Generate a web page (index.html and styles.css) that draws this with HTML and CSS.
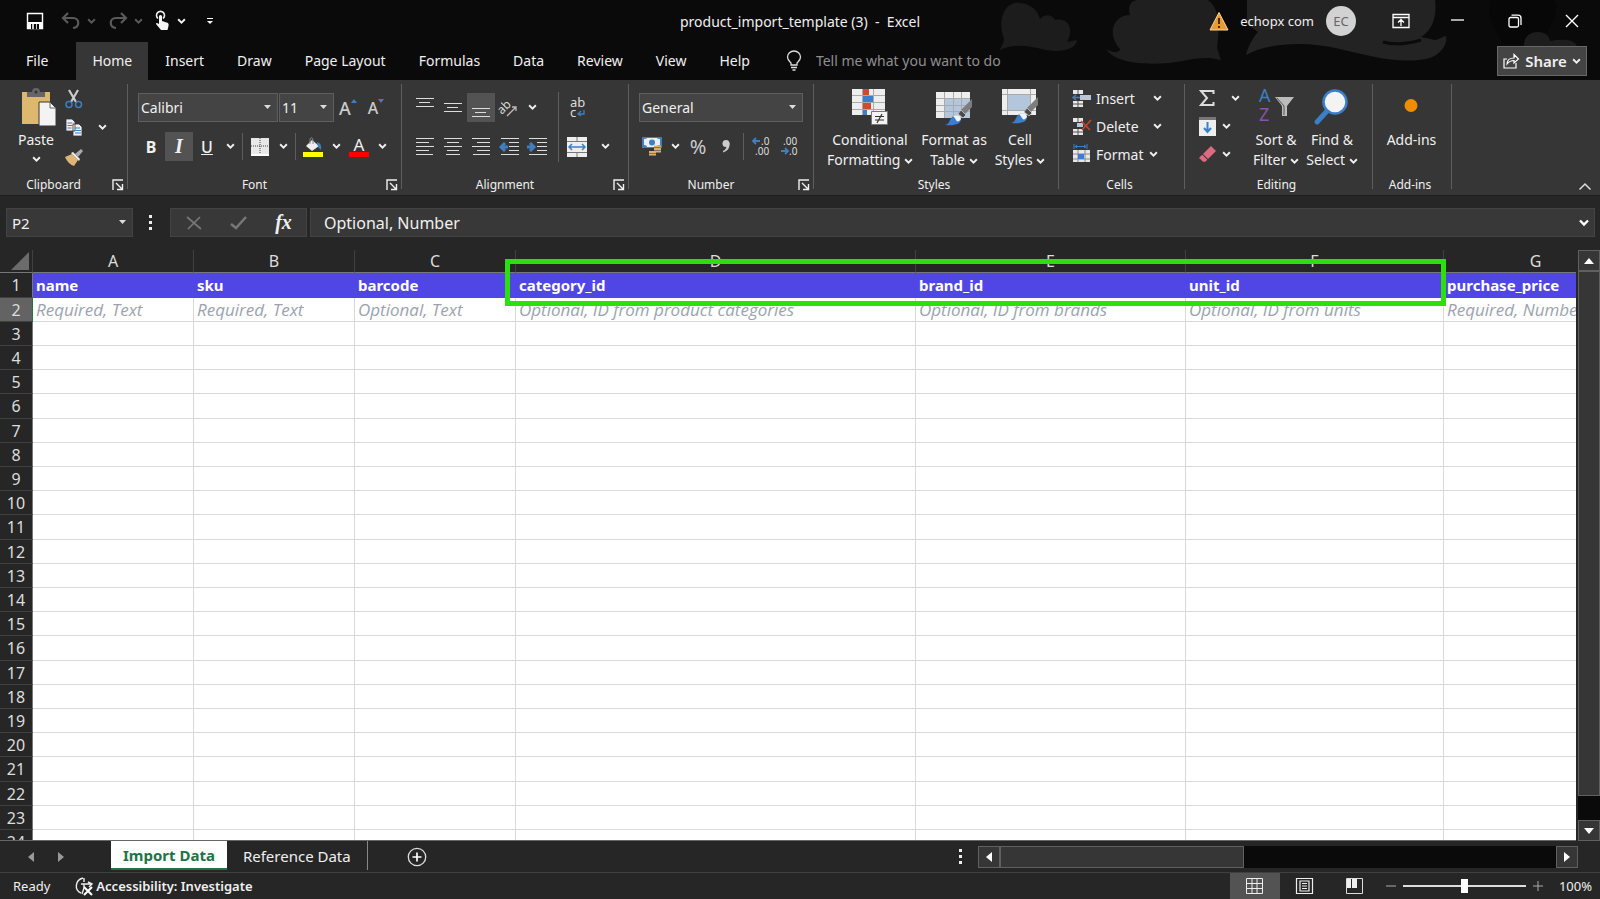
FILE: index.html
```html
<!DOCTYPE html>
<html lang="en">
<head>
  <meta charset="UTF-8">
  <meta name="viewport" content="width=device-width, initial-scale=1.0">
  <title>product_import_template (3) - Excel</title>
  <link rel="stylesheet" href="styles.css">
</head>
<body>
  <svg class="defs" aria-hidden="true">
    <symbol id="chev" viewBox="0 0 8 6"><path d="M1 1l3 3 3-3" fill="none" stroke="currentColor" stroke-width="1.7"/></symbol>
    <symbol id="launch" viewBox="0 0 12 12"><path d="M1 11V1h10M4 4l6 6M10.500 5v5.500H5" fill="none" stroke="currentColor" stroke-width="1.4"/></symbol>
    <symbol id="brush" viewBox="0 0 30 28"><path d="M28 1v8L18 19l-4-4z" fill="#7d7d7d"/><path d="M17 12l5 5-3 3-5-4z" fill="#4a4a4a" stroke="#ddd" stroke-width=".7"/><path d="M1 27c5-1 4-5 7-8 4-3 9-1 9 2 0 5-6 7-16 6z" fill="#3b7fc9"/><path d="M9 18c4-2 8 0 8 3-2 3-4 3-5 1s-2-3-3-4z" fill="#eef4fb"/></symbol>
  </svg>

  <header class="top">
    <svg class="art" viewBox="900 0 700 80" aria-hidden="true">
      <path d="M1000 50c2-5 4-8 4-11-7-18 0-38 16-36 12 1 18 8 20 16 6-6 12-4 15 1 14-3 19 10 12 22l10-2c-1 9-14 13-31 10-18-4-30-7-46 0z" fill="#1c1c1c"/>
      <path d="M1106 49c8 5 14 3 14 0-14-16-6-34 10-34-3-10 2-15 8-15h70c10 8 12 20 10 38l-1 10 4 12c-18-5-30 0-52 3-26 2-54 0-63-14z" fill="#1f1f1f"/>
      <path d="M1246 55c2-9 8-19 12-23l-11-8V0h188c2 16-2 30-14 37l14 3c6-1 8-4 11-4 2 8-5 18-16 22-28 7-60-2-86-8-39-10-76-7-98 5z" fill="#232323"/>
      <path d="M1383 42c10 3 24 2 38-2" fill="none" stroke="#0b0b0b" stroke-width="3"/>
      <path d="M1492 0h62c8 10-4 30-18 44h-32c-12-16-18-30-12-44z" fill="#070707"/>
      <path d="M1524 46c0-10 6-14 14-14 7 0 11 4 12 9 12-2 24-2 27 5z" fill="#1d1d1d"/>
    </svg>

    <div class="title-bar">
      <div class="quick">
        <button class="q-save" aria-label="Save"><svg width="18" height="18" viewBox="0 0 18 18"><path d="M1.500 1.500h15v15h-15z" fill="none" stroke="#fff" stroke-width="1.400"/><path d="M1 10h16v7H1z" fill="#fff"/><path d="M5 12h8v5H5z" fill="#0a0a0a"/><path d="M6 12h2v5H6zM10 12h1v5h-1z" fill="#ccc"/></svg></button>
        <button class="dim" aria-label="Undo"><svg width="20" height="18" viewBox="0 0 20 18"><path d="M7 1L2 6l5 5M2.500 6H12c7 0 7 9 0 10" fill="none" stroke="currentColor" stroke-width="2.200"/></svg></button>
        <button class="drop dim" aria-label="Undo list"><svg class="chev"><use href="#chev"/></svg></button>
        <button class="dim" aria-label="Redo"><svg width="20" height="18" viewBox="0 0 20 18"><path d="M13 1l5 5-5 5M17.500 6H8c-7 0-7 9 0 10" fill="none" stroke="currentColor" stroke-width="2.200"/></svg></button>
        <button class="drop dim" aria-label="Redo list"><svg class="chev"><use href="#chev"/></svg></button>
        <button aria-label="Touch mode"><svg width="16" height="20" viewBox="2 0 16 20"><path d="M5 7.500a4 4 0 1 1 5 0" fill="none" stroke="#eee" stroke-width="1.600"/><path d="M6 5q1.500-2 3 0v5l6 2q1 1 .5 3l-1 4H8l-5-6q0-2 3 0z" fill="#f4f4f4"/></svg></button>
        <button class="drop" aria-label="Touch options"><svg class="chev"><use href="#chev"/></svg></button>
        <button class="q-more" aria-label="Customize toolbar"><svg width="8" height="8" viewBox="0 0 8 8"><path d="M1 1.500h6" stroke="#fff"/><path d="M1 4h6L4 7z" fill="#fff"/></svg></button>
      </div>
      <div class="title">product_import_template (3)&nbsp; -&nbsp; Excel</div>
      <div class="account">
        <svg width="20" height="20" viewBox="0 0 20 20"><path d="M10 1.500L19 19H1z" fill="#e89a35" stroke="#ffd79a"/><path d="M10 7v6M10 15v2" stroke="#3a2404" stroke-width="1.800"/></svg>
        <span class="user">echopx com</span>
        <span class="avatar">EC</span>
      </div>
      <div class="win">
        <button aria-label="Ribbon display"><svg width="18" height="16" viewBox="0 0 18 16"><path d="M1 1.500h16v13H1zM1 4.500h16M9 13V7M6 9.500l3-3 3 3" fill="none" stroke="#fff" stroke-width="1.300"/></svg></button>
        <button aria-label="Minimize"><svg width="14" height="14" viewBox="0 0 14 14"><path d="M0 6h13" stroke="#fff" stroke-width="1.300"/></svg></button>
        <button aria-label="Restore"><svg width="14" height="14" viewBox="0 0 14 14"><rect x="1" y="3.500" width="9.500" height="9.500" rx="1.500" fill="none" stroke="#fff" stroke-width="1.300"/><path d="M3.500 1.200H10q3 0 3 3V11" fill="none" stroke="#fff" stroke-width="1.300"/></svg></button>
        <button aria-label="Close"><svg width="14" height="14" viewBox="0 0 14 14"><path d="M1 1l12 12M13 1L1 13" stroke="#fff" stroke-width="1.400"/></svg></button>
      </div>
    </div>

    <nav class="tabs">
      <button class="tab file">File</button>
      <button class="tab active">Home</button>
      <button class="tab">Insert</button>
      <button class="tab">Draw</button>
      <button class="tab">Page Layout</button>
      <button class="tab">Formulas</button>
      <button class="tab">Data</button>
      <button class="tab">Review</button>
      <button class="tab">View</button>
      <button class="tab">Help</button>
      <label class="tell">
        <svg width="16" height="21" viewBox="0 0 16 21"><path d="M5 15v-2C3 11 1.500 10 1.500 7a6.500 6 0 0 1 13 0c0 3-1.500 4-3.500 6v2zM5 17.500h6M6.500 20h3" fill="none" stroke="#ddd" stroke-width="1.300"/></svg>
        <input type="text" placeholder="Tell me what you want to do">
      </label>
      <button class="share"><svg width="17" height="16" viewBox="0 0 17 16"><path d="M4 6H1v9h12V10M4 11c0-4 3-6 7-6V1.500L15.500 6 11 10V7.500C8 7.500 6 8.500 4 11z" fill="none" stroke="#fff" stroke-width="1.200"/></svg>Share<svg class="chev"><use href="#chev"/></svg></button>
    </nav>
  </header>

  <section class="ribbon">
    <div class="group g-clip">
      <div class="body">
        <button class="big"><svg width="36" height="38" viewBox="-3 0 36 38"><path d="M1 4h28v32H1z" fill="#dfb86f"/><path d="M6 9V4h5q0-4 4-4t4 4h5v5z" fill="#666"/><circle cx="15" cy="4" r="1.500" fill="#333"/><path d="M18 14h11l6 6v18H18z" fill="#f3f3f3" stroke="#363636"/><path d="M29 14v6h6" fill="none" stroke="#666"/></svg><span>Paste</span><svg class="chev"><use href="#chev"/></svg></button>
        <div class="stack">
          <button class="tool" aria-label="Cut"><svg width="18" height="20" viewBox="0 0 18 20"><path d="M4 1l7 12M13 1L6 13" stroke="#ccc" stroke-width="2.200"/><circle cx="4" cy="15.500" r="3" fill="none" stroke="#3f7fc0" stroke-width="1.500"/><circle cx="13.500" cy="15.500" r="3" fill="none" stroke="#3f7fc0" stroke-width="1.500"/></svg></button>
          <button class="tool" aria-label="Copy"><svg width="18" height="19" viewBox="0 0 18 19"><path d="M1 1h6l3 3v9H1zM8 6h6l3 3v9H8z" fill="#f0f0f0" stroke="#363636" stroke-width=".8"/><path d="M2.500 5h5M2.500 7.500h5M2.500 10h4M10 10h5M10 12.500h6M10 15h6" stroke="#3f7fc0"/></svg></button>
          <button class="tool" aria-label="Format Painter"><svg width="20" height="18" viewBox="0 0 20 18"><path d="M1 9l7-3 6 6-4 6q-6-2-9-9z" fill="#e0b476"/><path d="M7 5l2-1 7 7-1 2z" fill="#eee"/><path d="M11 6l6-5 2 2-5 6z" fill="#aaa"/></svg></button>
        </div>
        <button class="drop mid" aria-label="Copy options"><svg class="chev"><use href="#chev"/></svg></button>
      </div>
      <div class="foot"><span>Clipboard</span><button aria-label="Clipboard settings"><svg class="launch"><use href="#launch"/></svg></button></div>
    </div>

    <div class="group g-font">
      <div class="body rows">
        <div class="row fields">
          <select class="font-name" aria-label="Font"><option>Calibri</option></select>
          <select class="font-size" aria-label="Font size"><option>11</option></select>
          <button class="tool grow" aria-label="Increase font size"><span>A</span><svg width="6" height="4" viewBox="0 0 6 4"><path d="M0 4l3-4 3 4z" fill="#3f7fc0"/></svg></button>
          <button class="tool grow small" aria-label="Decrease font size"><span>A</span><svg width="6" height="4" viewBox="0 0 6 4"><path d="M0 0l3 4 3-4z" fill="#3f7fc0"/></svg></button>
        </div>
        <div class="row">
          <button class="tool b">B</button>
          <button class="tool i on">I</button>
          <button class="tool u">U</button>
          <button class="drop" aria-label="Underline options"><svg class="chev"><use href="#chev"/></svg></button>
          <span class="sep"></span>
          <button class="tool" aria-label="Borders"><svg width="18" height="18" viewBox="0 0 18 18"><path d="M0 0h18v16H0z" fill="#e8e8e8"/><path d="M0 8h18M9 0v16" stroke="#444" stroke-dasharray="1 1"/><path d="M0 17h18" stroke="#fff" stroke-width="2"/></svg></button>
          <button class="drop" aria-label="Border options"><svg class="chev"><use href="#chev"/></svg></button>
          <span class="sep"></span>
          <button class="tool" aria-label="Fill color"><svg width="20" height="20" viewBox="0 0 20 20"><path d="M0 15h20v5H0z" fill="#ff0"/><path d="M9 3l7 6-7 5-6-5z" fill="#eee"/><path d="M7 7V2q2-3 3 1v4" fill="none" stroke="#888"/><path d="M14 5q5 1 4 8l-3-3z" fill="#3f7fc0"/></svg></button>
          <button class="drop" aria-label="Fill options"><svg class="chev"><use href="#chev"/></svg></button>
          <button class="tool color" aria-label="Font color"><span>A</span></button>
          <button class="drop" aria-label="Font color options"><svg class="chev"><use href="#chev"/></svg></button>
        </div>
      </div>
      <div class="foot"><span>Font</span><button aria-label="Font settings"><svg class="launch"><use href="#launch"/></svg></button></div>
    </div>

    <div class="group g-align">
      <div class="body">
        <div class="rows">
          <div class="row">
            <button class="tool" aria-label="Top align"><svg width="18" height="20" viewBox="0 0 18 20"><path d="M0 .5h18M3 4.500h11M0 8.500h18" stroke="#ddd"/></svg></button>
            <button class="tool" aria-label="Middle align"><svg width="18" height="20" viewBox="0 0 18 20"><path d="M0 5.500h18M3 9.500h11M0 13.500h18" stroke="#ddd"/></svg></button>
            <button class="tool on" aria-label="Bottom align"><svg width="18" height="20" viewBox="0 0 18 20"><path d="M0 10.500h18M3 14.500h11M0 18.500h18" stroke="#ddd"/></svg></button>
            <button class="tool" aria-label="Orientation"><svg width="18" height="18" viewBox="0 0 18 18"><text x="-2" y="11" transform="rotate(-45 6 9)" fill="#ddd" font-size="12">ab</text><path d="M7 17l9-9M12 8h4v4" fill="none" stroke="#bbb" stroke-width="1.300"/></svg></button>
            <button class="drop" aria-label="Orientation options"><svg class="chev"><use href="#chev"/></svg></button>
          </div>
          <div class="row">
            <button class="tool" aria-label="Align left"><svg width="18" height="18" viewBox="0 0 18 18"><path d="M0 .5h18M0 4.500h13M0 8.500h18M0 12.500h13M0 16.500h17" stroke="#ddd"/></svg></button>
            <button class="tool" aria-label="Center"><svg width="18" height="18" viewBox="0 0 18 18"><path d="M0 .5h18M3 4.500h12M0 8.500h18M3 12.500h12M2 16.500h14" stroke="#ddd"/></svg></button>
            <button class="tool" aria-label="Align right"><svg width="18" height="18" viewBox="0 0 18 18"><path d="M0 .5h18M5 4.500h13M0 8.500h18M5 12.500h13M1 16.500h17" stroke="#ddd"/></svg></button>
            <button class="tool" aria-label="Decrease indent"><svg width="20" height="18" viewBox="0 0 20 18"><path d="M2 .5h18M10 4.500h10M10 8.500h10M10 12.500h10M2 16.500h18" stroke="#ddd"/><path d="M9 9H3M6 5L2 9l4 4" fill="none" stroke="#3f7fc0" stroke-width="3"/></svg></button>
            <button class="tool" aria-label="Increase indent"><svg width="20" height="18" viewBox="0 0 20 18"><path d="M2 .5h18M10 4.500h10M10 8.500h10M10 12.500h10M2 16.500h18" stroke="#ddd"/><path d="M0 9h6M3 5l4 4-4 4" fill="none" stroke="#3f7fc0" stroke-width="3"/></svg></button>
          </div>
        </div>
        <span class="sep tall"></span>
        <div class="rows">
          <div class="row"><button class="tool" aria-label="Wrap text"><svg width="18" height="22" viewBox="0 0 18 22"><text x="2" y="10" fill="#ddd" font-size="13">ab<tspan x="2" y="20">c</tspan></text><path d="M16 13v4h-5M13 14l-3 3 3 2" fill="none" stroke="#3f7fc0" stroke-width="1.300"/></svg></button></div>
          <div class="row merge"><button class="tool" aria-label="Merge and center"><svg width="20" height="20" viewBox="0 0 20 20"><path d="M0 0h20v20H0z" fill="#eee"/><path d="M0 4.500h20M0 15.500h20M10 0v4M10 16v4" stroke="#777"/><path d="M2 10h16M5 7l-3 3 3 3M15 7l3 3-3 3" fill="none" stroke="#3f7fc0" stroke-width="1.500"/></svg></button><button class="drop" aria-label="Merge options"><svg class="chev"><use href="#chev"/></svg></button></div>
        </div>
      </div>
      <div class="foot"><span>Alignment</span><button aria-label="Alignment settings"><svg class="launch"><use href="#launch"/></svg></button></div>
    </div>

    <div class="group g-number">
      <div class="body rows">
        <div class="row fields"><select class="format" aria-label="Number format"><option>General</option></select></div>
        <div class="row">
          <button class="tool" aria-label="Accounting format"><svg width="20" height="20" viewBox="0 0 20 20"><path d="M0 0h20v11H0z" fill="#3f7fc0"/><path d="M2 2q3 0 3-1h10q0 1 3 1v6q-3 0-3 2H5q0-2-3-2z" fill="#e8f0f8"/><circle cx="10" cy="5.500" r="3" fill="#3f7fc0"/><path d="M12 9h7v7h-7z" fill="#363636"/><path d="M12 9.500h7M12 12h7M12 14.500h7M7 15h7M7 17.500h7" stroke="#deb06c" stroke-width="1.800"/></svg></button>
          <button class="drop" aria-label="Accounting options"><svg class="chev"><use href="#chev"/></svg></button>
          <button class="tool pct">%</button>
          <button class="tool" aria-label="Comma style"><svg width="8" height="13" viewBox="0 0 8 13"><circle cx="4" cy="3.500" r="3.500" fill="#ccc"/><path d="M7.500 3q1 7-6.500 9.500V11q4-2 3.500-6z" fill="#ccc"/></svg></button>
          <span class="sep"></span>
          <button class="tool" aria-label="Increase decimal"><svg width="20" height="20" viewBox="0 0 20 20"><text x="10" y="8" class="dec">.0</text><text x="4" y="18" class="dec">.00</text><path d="M9 4H3M5 1L2 4l3 3" fill="none" stroke="#3f7fc0" stroke-width="1.800"/></svg></button>
          <button class="tool" aria-label="Decrease decimal"><svg width="20" height="20" viewBox="0 0 20 20"><text x="4" y="8" class="dec">.00</text><text x="10" y="18" class="dec">.0</text><path d="M2 14h6M6 11l3 3-3 3" fill="none" stroke="#3f7fc0" stroke-width="1.800"/></svg></button>
        </div>
      </div>
      <div class="foot"><span>Number</span><button aria-label="Number settings"><svg class="launch"><use href="#launch"/></svg></button></div>
    </div>

    <div class="group g-styles">
      <div class="body">
        <button class="big"><svg width="38" height="38" viewBox="0 0 38 38"><path d="M1 1h33v26H1z" fill="#eee"/><path d="M1 7.500h33M1 14.500h33M1 21.500h33M11.500 1v26M22.500 1v26" stroke="#aaa"/><path d="M12 1h6v6h-6zM12 15h8v6h-8z" fill="#d04a2c"/><path d="M12 8h10v6H12zM12 22h4v5h-4z" fill="#3b7fc9"/><path d="M20.500 23.500h16v13h-16z" fill="#f3f3f3" stroke="#777"/><path d="M24 28.500h9M24 32h9M31 26l-5 9" stroke="#333" stroke-width="1.200"/></svg><span>Conditional</span><span>Formatting <svg class="chev"><use href="#chev"/></svg></span></button>
        <button class="big"><svg width="38" height="38" viewBox="0 0 38 38"><path d="M1 4h34v26H1z" fill="#eee"/><path d="M10 10h25v20H10z" fill="#b3c6dc"/><path d="M1 10.500h34M1 17.500h34M1 23.500h34M9.500 4v26M18.500 4v26M26.500 4v26" stroke="#aaa"/><use href="#brush" x="9" y="10" width="30" height="28"/></svg><span>Format as</span><span>Table <svg class="chev"><use href="#chev"/></svg></span></button>
        <button class="big"><svg width="38" height="38" viewBox="0 0 38 38"><path d="M1 1h34v26H1z" fill="#eee"/><path d="M7 7h22v16H7z" fill="#b3c6dc"/><path d="M1 6.500h34M1 22.500h34M6.500 1v26M29.500 1v26" stroke="#aaa"/><use href="#brush" x="9" y="8" width="30" height="28"/></svg><span>Cell</span><span>Styles <svg class="chev"><use href="#chev"/></svg></span></button>
      </div>
      <div class="foot"><span>Styles</span></div>
    </div>

    <div class="group g-cells">
      <div class="body stack">
        <button class="wide"><svg width="19" height="19" viewBox="0 0 19 19"><path d="M1 1h10v4H1zM1 12h10v6H1z" fill="#e8e8e8"/><path d="M6 1v4M6 12v6M1 15h10" stroke="#555"/><path d="M8 6h11v5H8z" fill="#b3c6dc"/><path d="M8 8.500H1M4 6L1 8.500 4 11" fill="none" stroke="#3b7fc9" stroke-width="1.500"/></svg><span class="far">Insert</span><svg class="chev"><use href="#chev"/></svg></button>
        <button class="wide"><svg width="19" height="19" viewBox="0 0 19 19"><path d="M1 1h10v4H1zM1 12h10v6H1z" fill="#e8e8e8"/><path d="M6 1v4M6 12v6M1 15h10" stroke="#555"/><path d="M5 6h6v4H5z" fill="#b3c6dc"/><path d="M9 4l9 9M19 3l-9 10" stroke="#c8452a" stroke-width="1.600"/></svg><span class="far">Delete</span><svg class="chev"><use href="#chev"/></svg></button>
        <button class="wide"><svg width="19" height="20" viewBox="0 0 19 20"><path d="M1 6h17v12H1z" fill="#e8e8e8"/><path d="M1 10h17M1 15h17M6 6v12M13 6v12" stroke="#888"/><path d="M6 10h6v5H6z" fill="#3b7fc9"/><path d="M2 0v5M15 0v5M3 2.500h11M5 1L3 2.500 5 4M12 1l2 1.500L12 4" fill="none" stroke="#3b7fc9"/></svg><span>Format</span><svg class="chev"><use href="#chev"/></svg></button>
      </div>
      <div class="foot"><span>Cells</span></div>
    </div>

    <div class="group g-edit">
      <div class="body">
        <div class="stack">
          <button class="wide sum" aria-label="AutoSum"><svg width="18" height="18" viewBox="1 0 18 18"><path d="M15.500 5V2H3l6 7-6 7h12.500v-3" fill="none" stroke="#ddd" stroke-width="2"/></svg><svg class="chev"><use href="#chev"/></svg></button>
          <button class="wide" aria-label="Fill"><svg width="18" height="19" viewBox="0 0 18 19"><path d="M0 0h17v19H0z" fill="#eee"/><path d="M0 0h17v3H0z" fill="#777"/><path d="M8.500 5v10M5 11l3.500 4 3.500-4" fill="none" stroke="#3b7fc9" stroke-width="2"/></svg><svg class="chev"><use href="#chev"/></svg></button>
          <button class="wide" aria-label="Clear"><svg width="18" height="18" viewBox="0 0 18 18"><path d="M12 1l5 5-8 8-5-5z" fill="#dc6b82"/><path d="M3.300 9.700l5 5-2 2H4l-3.500-3.500v-1z" fill="#dc6b82"/></svg><svg class="chev"><use href="#chev"/></svg></button>
        </div>
        <button class="big"><svg width="38" height="38" viewBox="0 0 38 38"><text x="2" y="14" fill="#3b7fc9" font-size="18">A<tspan x="2" y="33" fill="#8a52a8">Z</tspan></text><path d="M18 9h19l-7 9v10h-5V18z" fill="#bbb"/><path d="M20 10l7 8v9" fill="none" stroke="#555"/></svg><span>Sort &amp;</span><span>Filter <svg class="chev"><use href="#chev"/></svg></span></button>
        <button class="big"><svg width="38" height="38" viewBox="0 0 38 38"><path d="M4 34l11-12" stroke="#3b7fc9" stroke-width="5" stroke-linecap="round"/><circle cx="22" cy="14" r="11.500" fill="#f3f3f3" stroke="#3b7fc9" stroke-width="2.500"/></svg><span>Find &amp;</span><span>Select <svg class="chev"><use href="#chev"/></svg></span></button>
      </div>
      <div class="foot"><span>Editing</span></div>
    </div>

    <div class="group g-add">
      <div class="body">
        <button class="big"><svg width="38" height="38" viewBox="0 0 38 38"><circle cx="18" cy="17.500" r="6.500" fill="#f08c00"/></svg><span>Add-ins</span></button>
      </div>
      <div class="foot"><span>Add-ins</span></div>
    </div>
    <button class="collapse" aria-label="Collapse ribbon"><svg width="14" height="9" viewBox="0 0 14 9"><path d="M1.500 7.500L7 2l5.500 5.500" fill="none" stroke="#ddd" stroke-width="1.500"/></svg></button>
  </section>

  <section class="formula-bar">
    <select class="name-box" aria-label="Name box"><option>P2</option></select>
    <span class="dots"></span>
    <div class="fx">
      <button aria-label="Cancel"><svg width="16" height="14" viewBox="0 0 16 14"><path d="M1 1l14 12M14 1L2 13" stroke="#777" stroke-width="1.700"/></svg></button>
      <button aria-label="Enter"><svg width="17" height="14" viewBox="0 0 17 14"><path d="M1 8l5 4L16 1" fill="none" stroke="#777" stroke-width="2.500"/></svg></button>
      <button class="fn">fx</button>
    </div>
    <div class="formula">
      <input type="text" aria-label="Formula" value="Optional, Number">
      <button aria-label="Expand formula bar"><svg width="10" height="8" viewBox="0 0 10 8"><path d="M1 1.500l4 4 4-4" fill="none" stroke="#fff" stroke-width="2.400"/></svg></button>
    </div>
  </section>

  <main class="sheet">
    <div class="grid">
      <table>
        <colgroup><col class="c-num"><col class="c-s"><col class="c-s"><col class="c-s"><col class="c-d"><col class="c-e"><col class="c-f"><col class="c-g"></colgroup>
        <thead>
          <tr><th class="corner"><svg width="18" height="18" viewBox="0 0 18 18"><path d="M18 0v18H0z" fill="#6b6b6b"/></svg></th><th>A</th><th>B</th><th>C</th><th>D</th><th>E</th><th>F</th><th>G</th></tr>
        </thead>
        <tbody id="rows">
          <tr class="head"><th>1</th><td>name</td><td>sku</td><td>barcode</td><td>category_id</td><td>brand_id</td><td>unit_id</td><td>purchase_price</td></tr>
          <tr class="hint"><th>2</th><td>Required, Text</td><td>Required, Text</td><td>Optional, Text</td><td>Optional, ID from product categories</td><td>Optional, ID from brands</td><td>Optional, ID from units</td><td>Required, Number</td></tr>
        </tbody>
      </table>
      <div class="mark"></div>
    </div>
    <div class="v-scroll">
      <button aria-label="Scroll up"><svg width="10" height="6" viewBox="0 0 10 6"><path d="M0 6l5-6 5 6z" fill="#fff"/></svg></button>
      <div class="thumb"></div>
      <div class="track"></div>
      <button aria-label="Scroll down"><svg width="10" height="6" viewBox="0 0 10 6"><path d="M0 0l5 6 5-6z" fill="#fff"/></svg></button>
    </div>
  </main>

  <div class="sheet-bar">
    <div class="arrows">
      <button aria-label="Previous sheet"><svg width="6" height="10" viewBox="0 0 6 10"><path d="M6 0v10L0 5z" fill="#999"/></svg></button>
      <button aria-label="Next sheet"><svg width="6" height="10" viewBox="0 0 6 10"><path d="M0 0v10l6-5z" fill="#999"/></svg></button>
    </div>
    <button class="sheet-tab current">Import Data</button>
    <button class="sheet-tab">Reference Data</button>
    <button class="add" aria-label="New sheet"><svg width="20" height="20" viewBox="0 0 20 20"><circle cx="10" cy="10" r="8.700" fill="none" stroke="#ddd" stroke-width="1.300"/><path d="M10 5.500v9M5.500 10h9" stroke="#fff" stroke-width="1.700"/></svg></button>
    <span class="dots"></span>
    <div class="h-scroll">
      <button aria-label="Scroll left"><svg width="6" height="10" viewBox="0 0 6 10"><path d="M6 0v10L0 5z" fill="#fff"/></svg></button>
      <div class="thumb"></div>
      <div class="track"></div>
      <button aria-label="Scroll right"><svg width="6" height="10" viewBox="0 0 6 10"><path d="M0 0v10l6-5z" fill="#fff"/></svg></button>
    </div>
  </div>

  <footer class="status">
    <span>Ready</span>
    <button class="access"><svg width="19" height="19" viewBox="0 0 19 19"><path d="M8 1C0 3-1 13 6 16M9 1v4M6 7h11M9 7v4l-2 6M13 5l4 2-3 3" fill="none" stroke="#eee" stroke-width="1.400"/><path d="M9 10l8 8M17 10l-8 8" stroke="#fff" stroke-width="2"/></svg>Accessibility: Investigate</button>
    <div class="views">
      <button class="on" aria-label="Normal"><svg width="17" height="16" viewBox="0 0 17 16"><path d="M.5.500h16v15H.5zM.5 5.500h16M.5 10.500h16M6 .5v15M11 .5v15" fill="none" stroke="#eee"/></svg></button>
      <button aria-label="Page layout view"><svg width="17" height="16" viewBox="0 0 17 16"><path d="M.5.500h16v15H.5zM4 3h9v10H4zM6 5.500h5M6 8h5M6 10.500h5" fill="none" stroke="#eee" stroke-width="1.200"/></svg></button>
      <button aria-label="Page break view"><svg width="17" height="16" viewBox="0 0 17 16"><path d="M.5.500h16v15H.5z" fill="none" stroke="#ddd"/><path d="M1 1h4v9H1zM6 1h5v9H6z" fill="#eee"/></svg></button>
    </div>
    <div class="zoom">
      <button aria-label="Zoom out"><svg width="10" height="10" viewBox="0 0 10 10"><path d="M0 5h10" stroke="#aaa"/></svg></button>
      <input type="range" min="0" max="100" value="50" aria-label="Zoom">
      <button aria-label="Zoom in"><svg width="10" height="10" viewBox="0 0 10 10"><path d="M0 5h10M5 0v10" stroke="#aaa"/></svg></button>
      <span>100%</span>
    </div>
  </footer>

  <script>
    // Empty rows below the template rows
    const rows = document.getElementById('rows');
    for (let n = 3; n <= 24; n++) {
      const tr = document.createElement('tr');
      tr.innerHTML = '<th>' + n + '</th>' + '<td></td>'.repeat(7);
      rows.appendChild(tr);
    }
  </script>
</body>
</html>
```
FILE: styles.css
```css
* {
  box-sizing: border-box;
}

body {
  margin: 0;
  height: 100vh;
  display: flex;
  flex-direction: column;
  overflow: hidden;
  background: #262626;
  color: #f0f0f0;
  font-family: "Noto Sans", "Open Sans", sans-serif;
  font-size: 14px;
}

button, input, select {
  font: inherit;
  color: inherit;
  background: none;
  border: 0;
  padding: 0;
  margin: 0;
}

button {
  display: flex;
  align-items: center;
  justify-content: center;
  white-space: nowrap;
}

svg {
  flex: none;
  overflow: visible;
}

.defs {
  position: absolute;
  width: 0;
  height: 0;
}

.chev {
  width: 9px;
  height: 7px;
}

.launch {
  width: 12px;
  height: 12px;
}

.drop {
  width: 18px;
  height: 29px;
}

.dim {
  color: #5a5a5a;
}

/* title bar and tabs */
.top {
  position: relative;
  background: #0a0a0a;
}

.art {
  position: absolute;
  top: 0;
  right: 0;
  width: 700px;
  height: 80px;
}

.title-bar {
  position: relative;
  display: grid;
  grid-template-columns: 1fr auto 1fr;
  grid-template-areas: "quick title right";
  align-items: center;
  height: 42px;
}

.quick {
  display: flex;
  align-items: center;
  padding-left: 26px;
}

.q-save {
  margin-right: 17px;
}

.quick .drop {
  width: 20px;
  margin-right: 7px;
}

.q-more {
  margin-left: 8px;
}

.account {
  grid-area: 1 / 3;
  justify-self: end;
  display: flex;
  align-items: center;
  margin-right: 244px;
  font-size: 13px;
}

.user {
  margin: 0 12px 0 11px;
}

.avatar {
  width: 30px;
  height: 30px;
  border-radius: 50%;
  background: #d2d2d2;
  color: #666;
  line-height: 30px;
  text-align: center;
}

.win {
  grid-area: 1 / 3;
  justify-self: end;
  display: flex;
  height: 38px;
}

.win button {
  width: 57px;
}

.tabs {
  position: relative;
  display: flex;
  gap: 1px;
  height: 38px;
}

.tab {
  padding: 0 16px 2px;
}

.file {
  padding: 0 27px 2px 26px;
}

.tab.active {
  background: #363636;
}

.tell {
  display: flex;
  align-items: center;
  gap: 14px;
  padding: 0 0 2px 19px;
}

.tell input {
  width: 260px;
}

.tell input::placeholder {
  color: #8f8f8f;
}

.share {
  align-self: center;
  gap: 5px;
  width: 90px;
  height: 30px;
  margin: 0 13px 0 auto;
  background: #444;
  border: 1px solid #686868;
  font-size: 15px;
  font-weight: 600;
}

/* ribbon */
.ribbon {
  display: flex;
  height: 115px;
  padding-top: 4px;
  background: #363636;
}

.group {
  display: flex;
  flex-direction: column;
  flex: none;
  background: linear-gradient(#5e5e5e, #5e5e5e) right top / 1px 105px no-repeat;
}

.g-clip { width: 128px; }
.g-font { width: 274px; }
.g-align { width: 227px; }
.g-number { width: 185px; }
.g-styles { width: 245px; }
.g-cells { width: 126px; }
.g-edit { width: 188px; }
.g-add { width: 79px; }

.body {
  display: flex;
  flex: 1;
}

.foot {
  display: flex;
  align-items: center;
  height: 20px;
  font-size: 12px;
}

.foot span {
  flex: 1;
  padding: 0 5px 2px 0;
  text-align: center;
}

.foot button {
  margin-right: 4px;
}

.rows {
  display: flex;
  flex-direction: column;
  gap: 10px;
  padding-top: 9px;
}

.row {
  display: flex;
  align-items: center;
}

.tool {
  width: 28px;
  height: 29px;
}

.on {
  background: #535353;
}

.sep {
  width: 1px;
  height: 27px;
  margin: 0 3px;
  background: #5e5e5e;
}

.sep.tall {
  height: 70px;
  margin: 8px 4px 0 5px;
}

.big {
  flex-direction: column;
  justify-content: flex-start;
  padding-top: 4px;
  line-height: 20px;
}

.big > svg:first-child {
  margin-bottom: 4px;
}

.big > .chev {
  margin-top: 6px;
}

.stack {
  display: flex;
  flex-direction: column;
}

.g-clip .big {
  width: 60px;
  padding-left: 12px;
}

.g-clip .stack {
  width: 28px;
}

.mid {
  margin: 29px 0 0 5px;
}

.g-font .body {
  padding-left: 9px;
}

.g-align .body {
  padding-left: 9px;
}

.g-align .rows:first-child {
  width: 142px;
}

.merge {
  gap: 5px;
}

.g-number .body {
  padding-left: 9px;
}

select {
  appearance: none;
  height: 29px;
  padding-left: 2px;
  border: 1px solid #5e5e5e;
  background: #444 url("data:image/svg+xml,%3Csvg xmlns='http://www.w3.org/2000/svg' width='8' height='5'%3E%3Cpath d='M0 0h7L3.500 4z' fill='%23ddd'/%3E%3C/svg%3E") right 5px center no-repeat;
}

.font-name {
  width: 140px;
  margin: 0 1px 0 1px;
}

.font-size {
  width: 55px;
}

.format {
  width: 164px;
  margin-left: 1px;
}

.grow {
  align-items: center;
  font-size: 18px;
  font-weight: 500;
  color: #ccc;
}

.grow svg {
  margin-bottom: 14px;
}

.small {
  font-size: 16px;
}

.b {
  font-size: 16px;
  font-weight: 700;
}

.i {
  font: italic 700 20px "Liberation Serif", serif;
}

.u {
  font-size: 16px;
  font-weight: 500;
  text-decoration: underline;
}

.color span {
  width: 20px;
  height: 20px;
  border-bottom: 5px solid #f00;
  font-size: 17px;
  line-height: 15px;
  text-align: center;
}

.pct {
  font-size: 20px;
  color: #ccc;
}

.dec {
  font-size: 10px;
  fill: #ddd;
}

.g-styles .body {
  padding-left: 11px;
}

.g-styles .big {
  width: 66px;
}

.g-styles .big:first-child {
  width: 90px;
  margin-right: 6px;
}

.wide {
  justify-content: flex-start;
  height: 28px;
  gap: 5px;
}

.g-cells .stack {
  padding-left: 13px;
}

.far {
  width: 52px;
  text-align: left;
}

.g-edit .stack {
  width: 50px;
  padding-left: 14px;
}

.sum {
  gap: 14px;
}

.g-edit .big {
  width: 56px;
}

.g-edit .stack + .big {
  margin-left: 13px;
}

.g-add .big {
  width: 77px;
}

.collapse {
  align-self: flex-end;
  height: 18px;
  margin: 0 8px 0 auto;
}

/* formula bar */
.formula-bar {
  display: flex;
  height: 55px;
  padding: 12px 5px 14px 6px;
  border-top: 1px solid #1e1e1e;
}

.name-box {
  width: 127px;
  padding-left: 5px;
  background-color: #383838;
  border-color: #434343;
  font-size: 15px;
}

.dots {
  width: 3px;
  height: 15px;
  background: repeating-linear-gradient(#eee 0 3px, transparent 3px 6px);
}

.formula-bar .dots {
  margin: 7px 18px 0 16px;
}

.fx {
  display: flex;
  width: 137px;
  height: 29px;
  background: #383838;
  border: 1px solid #434343;
}

.fx button {
  flex: 1;
}

.fn {
  font: italic 700 20px "Liberation Serif", serif;
}

.formula {
  display: flex;
  flex: 1;
  height: 29px;
  margin-left: 3px;
  padding: 0 5px 0 13px;
  background: #383838;
  border: 1px solid #434343;
}

.formula input {
  flex: 1;
  font-size: 16px;
}

/* sheet */
.sheet {
  display: flex;
  flex: 1;
  min-height: 0;
}

.grid {
  position: relative;
  flex: 1;
  overflow: hidden;
  margin-right: 2px;
  background: #fff;
  border-bottom: 1px solid #666;
}

table {
  width: 1628px;
  table-layout: fixed;
  border-collapse: separate;
  border-spacing: 0;
}

.c-num { width: 33px; }
.c-s { width: 161px; }
.c-d { width: 400px; }
.c-e { width: 270px; }
.c-f { width: 258px; }
.c-g { width: 184px; }

th, td {
  height: 24px;
  padding: 0;
  line-height: 20px;
  white-space: nowrap;
  border-right: 1px solid #d9d9d9;
  border-bottom: 1px solid #d9d9d9;
}

/* row pitch comes to a little over 24px */
tbody tr:nth-child(5n+1) td {
  height: 25px;
}

th {
  background: #262626;
  border-color: #404040;
  font-size: 16px;
  font-weight: 400;
  color: #ddd;
}

thead th {
  height: 23px;
  border-bottom-color: #777;
}

tbody th {
  border-right-color: #777;
}

.corner {
  padding-right: 3px;
  text-align: right;
  line-height: 0;
}

td {
  padding-left: 3px;
  font-size: 15px;
}

.head td {
  background: #4f46e5;
  border-color: #4f46e5;
  font-weight: 700;
  color: #fff;
}

.hint td {
  font-family: "Open Sans", sans-serif;
  font-size: 17px;
  font-style: italic;
  color: #9ca3af;
}

.hint th {
  background: #636363;
  border-right-color: #217346;
}

.mark {
  position: absolute;
  top: 9px;
  left: 505px;
  width: 941px;
  height: 47px;
  border: 5px solid #2be00b;
}

.v-scroll {
  display: flex;
  flex-direction: column;
  width: 22px;
}

.v-scroll button,
.h-scroll button,
.thumb {
  background: #363636;
  border: 1px solid #606060;
}

.v-scroll button {
  height: 21px;
}

.v-scroll .thumb {
  flex: 525;
}

.v-scroll .track {
  flex: 24;
}

.track {
  background: #0a0a0a;
}

/* sheet tabs */
.sheet-bar {
  display: flex;
  height: 31px;
  padding-right: 22px;
}

.arrows {
  display: flex;
  gap: 24px;
  width: 111px;
  padding-left: 28px;
}

.sheet-tab {
  height: 29px;
  padding: 0 16px;
  font-size: 15px;
}

.current {
  padding: 0 12px;
  background: #fff;
  color: #217346;
  border-bottom: 2px solid #217346;
  font-weight: 700;
}

.sheet-tab:not(.current) {
  border-right: 1px solid #888;
}

.add {
  margin: 0 auto 0 39px;
}

.sheet-bar .dots {
  margin: 8px 16px 0 0;
}

.h-scroll {
  display: flex;
  width: 600px;
  height: 22px;
  margin-top: 5px;
}

.h-scroll button {
  width: 22px;
}

.h-scroll .thumb {
  flex: 243;
}

.h-scroll .track {
  flex: 313;
}

/* status bar */
.status {
  display: flex;
  align-items: center;
  height: 27px;
  padding: 0 8px 0 13px;
  border-top: 1px solid #404040;
  font-size: 13px;
}

.access {
  gap: 2px;
  margin-left: 25px;
  font-weight: 600;
}

.views {
  display: flex;
  align-self: stretch;
  margin-left: auto;
}

.views button {
  width: 50px;
}

.zoom {
  display: flex;
  align-items: center;
  margin-left: 6px;
}

.zoom input {
  appearance: none;
  width: 123px;
  height: 14px;
  margin: 0 7px;
  background: linear-gradient(#ddd, #ddd) center / 100% 2px no-repeat;
}

.zoom input::-webkit-slider-thumb {
  appearance: none;
  width: 7px;
  height: 14px;
  background: #fff;
}

.zoom span {
  margin-left: 16px;
}
```
